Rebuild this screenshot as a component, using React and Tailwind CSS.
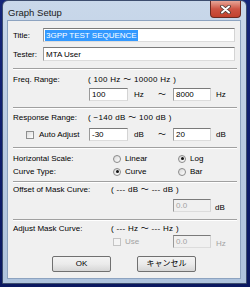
import React from "react";

function Field({ w, disabled, children }) {
  return (
    <div
      className={`${w} h-[13px] box-border border border-t-[#7a7a7a] border-l-[#999999] border-r-[#d4d4d4] border-b-[#dcdcdc] flex items-center pl-[2px] leading-[11px] overflow-hidden whitespace-nowrap ${
        disabled ? "bg-[#f0f0f0] text-[#a3a3a3]" : "bg-white text-black"
      }`}
    >
      {children}
    </div>
  );
}

function Check({ disabled }) {
  return (
    <span
      className={`block w-[8px] h-[8px] box-border border ${
        disabled ? "border-[#c4c4c4] bg-[#f4f4f4]" : "border-[#8e8f8f] bg-gradient-to-br from-[#dcdcdc] to-white"
      }`}
    />
  );
}

function Radio({ checked }) {
  return (
    <span className="w-[8px] h-[8px] box-border rounded-full border border-[#8a8a8a] bg-gradient-to-br from-[#d8d8d8] to-white flex items-center justify-center">
      {checked ? <span className="block w-[3px] h-[3px] rounded-full bg-[#111111]" /> : null}
    </span>
  );
}

function Sep() {
  return <div className="ml-[5px] w-[224px] h-[2px] box-border border-t border-t-[#a0a0a0] border-b border-b-white" />;
}

function Btn({ children }) {
  return (
    <div className="w-[59px] h-[16px] box-border rounded-[2px] border border-[#707070] bg-gradient-to-b from-[#f3f3f3] via-[#ebebeb] to-[#d6d6d6] flex items-center justify-center text-black leading-none">
      {children}
    </div>
  );
}

export default function App() {
  return (
    <div className="w-[250px] h-[287px] bg-gradient-to-b from-[#15267a] via-[#0e1d6c] to-[#0a1860] overflow-hidden font-['Liberation_Sans','Noto_Sans_CJK_JP',sans-serif]">
      <div className="ml-[2px] w-[245px] h-[284px] box-border rounded-t-[6px] border border-[#3d4d6e] bg-gradient-to-b from-[#c9d8ea] via-[#b9cbe2] to-[#aec3dd] flex flex-col">
        {/* title bar */}
        <div className="h-[20px] flex items-start">
          <div className="pl-[5px] pt-[6px] text-[9.5px] leading-[11px] text-[#1a1a1a]">Graph Setup</div>
          <div className="ml-auto mr-[5px] w-[31px] h-[17px] box-border rounded-b-[4px] border border-t-0 border-[#6b2a22] bg-gradient-to-b from-[#e6a597] via-[#cd5443] to-[#c2412d] flex items-center justify-center">
            <svg width="11" height="9" viewBox="0 0 11 9">
              <path d="M2 1.5 L9 7.5 M9 1.5 L2 7.5" stroke="#4a3a36" strokeWidth="3.6" strokeLinecap="round" />
              <path d="M2 1.5 L9 7.5 M9 1.5 L2 7.5" stroke="#ffffff" strokeWidth="2" strokeLinecap="round" />
            </svg>
          </div>
        </div>
        {/* client */}
        <div className="ml-[5px] w-[232px] h-[257px] bg-[#f0f0f0] shadow-[0_0_0_1px_#8da3c0] flex flex-col text-[8px] leading-[11px] text-black">
          {/* Title */}
          <div className="mt-[7px] h-[14px] flex items-center pl-[5px]">
            <span className="w-[30px]">Title:</span>
            <div className="w-[192px] h-[14px] box-border border border-t-[#7a7a7a] border-l-[#999999] border-r-[#d4d4d4] border-b-[#dcdcdc] bg-white flex items-center pl-[1px]">
              <span className="bg-[#3399ff] text-white px-[1px] leading-[11px]">3GPP TEST SEQUENCE</span>
            </div>
          </div>
          {/* Tester */}
          <div className="mt-[5px] h-[14px] flex items-center pl-[5px]">
            <span className="w-[30px]">Tester:</span>
            <div className="w-[192px] h-[14px] box-border border border-t-[#7a7a7a] border-l-[#999999] border-r-[#d4d4d4] border-b-[#dcdcdc] bg-white flex items-center pl-[2px]">
              MTA User
            </div>
          </div>
          <div className="mt-[7px]">
            <Sep />
          </div>
          {/* Freq */}
          <div className="mt-[4px] h-[11px] flex pl-[5px]">
            <span className="w-[75px]">Freq. Range:</span>
            <span className="tracking-[0.3px]">( 100 Hz ～ 10000 Hz )</span>
          </div>
          <div className="mt-[3px] h-[13px] flex items-center pl-[81px]">
            <Field w="w-[39px]">100</Field>
            <span className="ml-[6px] w-[24px]">Hz</span>
            <span className="w-[15px]">～</span>
            <Field w="w-[38px]">8000</Field>
            <span className="ml-[5px]">Hz</span>
          </div>
          <div className="mt-[6px]">
            <Sep />
          </div>
          {/* Response */}
          <div className="mt-[3px] h-[11px] flex pl-[5px]">
            <span className="w-[75px]">Response Range:</span>
            <span className="tracking-[0.3px]">( −140 dB ～ 100 dB )</span>
          </div>
          <div className="mt-[5px] h-[13px] flex items-center">
            <div className="w-[81px] flex items-center pl-[18px]">
              <Check />
              <span className="ml-[5px]">Auto Adjust</span>
            </div>
            <Field w="w-[39px]">-30</Field>
            <span className="ml-[6px] w-[24px]">dB</span>
            <span className="w-[15px]">～</span>
            <Field w="w-[38px]">20</Field>
            <span className="ml-[5px]">dB</span>
          </div>
          <div className="mt-[6px]">
            <Sep />
          </div>
          {/* Scale */}
          <div className="mt-[4px] h-[11px] flex items-center pl-[5px]">
            <span className="w-[100px]">Horizontal Scale:</span>
            <Radio />
            <span className="ml-[4px] w-[53px]">Linear</span>
            <Radio checked />
            <span className="ml-[4px]">Log</span>
          </div>
          <div className="mt-[2px] h-[11px] flex items-center pl-[5px]">
            <span className="w-[100px]">Curve Type:</span>
            <Radio checked />
            <span className="ml-[4px] w-[53px]">Curve</span>
            <Radio />
            <span className="ml-[4px]">Bar</span>
          </div>
          <div className="mt-[4px]">
            <Sep />
          </div>
          {/* Offset */}
          <div className="mt-[1px] h-[11px] flex pl-[5px]">
            <span className="w-[98px]">Offset of Mask Curve:</span>
            <span className="tracking-[0.3px]">( --- dB ～ --- dB )</span>
          </div>
          <div className="mt-[4px] h-[13px] flex items-center pl-[165px]">
            <Field w="w-[38px]" disabled>
              0.0
            </Field>
            <span className="ml-[4px] mt-[4px]">dB</span>
          </div>
          <div className="mt-[7px]">
            <Sep />
          </div>
          {/* Adjust */}
          <div className="mt-[2px] h-[11px] flex pl-[5px]">
            <span className="w-[98px]">Adjust Mask Curve:</span>
            <span className="tracking-[0.3px]">( --- Hz ～ --- Hz )</span>
          </div>
          <div className="mt-[1px] h-[13px] flex items-center">
            <div className="w-[165px] flex items-center pl-[105px]">
              <Check disabled />
              <span className="ml-[4px] text-[#a3a3a3]">Use</span>
            </div>
            <Field w="w-[38px]" disabled>
              0.0
            </Field>
            <span className="ml-[5px] mt-[4px] text-[#a3a3a3]">Hz</span>
          </div>
          {/* Buttons */}
          <div className="mt-[8px] flex justify-center gap-[26px]">
            <Btn>OK</Btn>
            <Btn>キャンセル</Btn>
          </div>
        </div>
      </div>
    </div>
  );
}
